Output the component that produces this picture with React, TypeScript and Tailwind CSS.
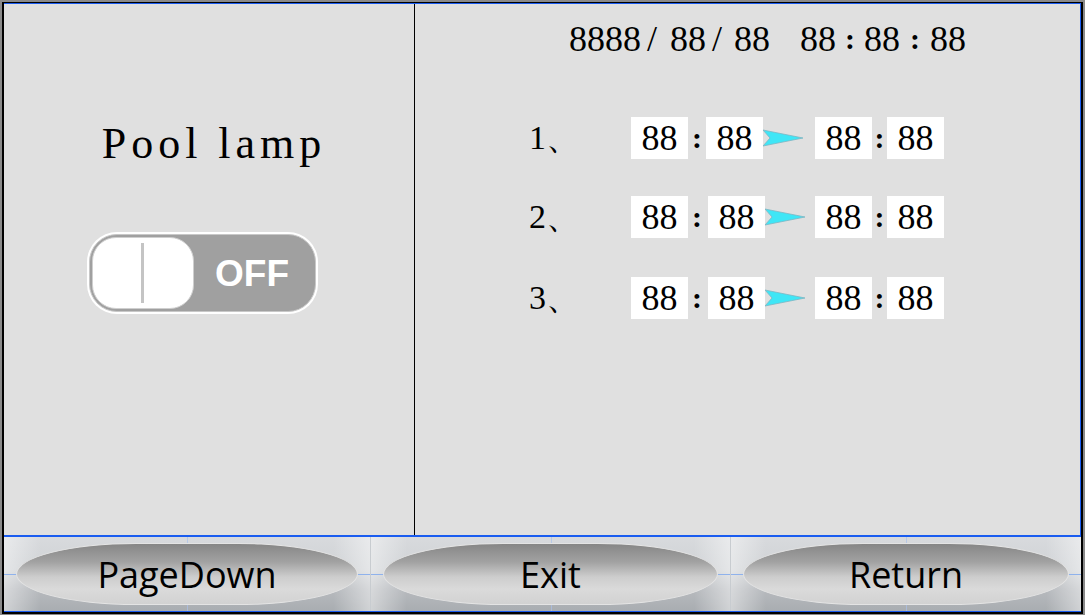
import React from "react";

const serif = "font-['Liberation_Serif','Times_New_Roman',serif]";

function Arrow() {
  return (
    <svg width="40" height="18" viewBox="0 0 40 18" className="shrink-0">
      <polygon points="0,1 40,9 0,17 7,9" fill="#3fe6f6" stroke="#7fb6c4" strokeWidth="0.8" />
    </svg>
  );
}

function Box({ children }: { children: React.ReactNode }) {
  return (
    <div className={`w-[57px] h-[42px] bg-white flex items-center justify-center text-[36px] leading-none text-black ${serif}`}>
      {children}
    </div>
  );
}

function Colon({ w }: { w: number }) {
  return (
    <div style={{ width: w }} className={`text-center text-[30px] font-bold leading-none text-black ${serif}`}>
      :
    </div>
  );
}

function TimeRow({ n, shift }: { n: number; shift: number }) {
  return (
    <div className="flex items-center">
      <div className={`w-[102px] text-[34px] leading-none text-black ${serif}`}>{n}、</div>
      <Box>88</Box>
      <Colon w={18} />
      <div style={{ marginLeft: shift }} className="flex items-center">
        <Box>88</Box>
        <Arrow />
      </div>
      <div style={{ marginLeft: 12 - shift }} className="flex items-center">
        <Box>88</Box>
        <Colon w={15} />
        <Box>88</Box>
      </div>
    </div>
  );
}

function Toggle() {
  return (
    <div className="w-[231px] h-[82px] rounded-[30px] bg-white p-[2px]">
      <div className="w-full h-full rounded-[28px] bg-[#a0a0a0] border border-[#c8c8c8] flex items-center p-[2px]">
        <div className="w-[102px] h-full rounded-[24px] bg-white border border-[#cfcfcf] flex items-center justify-center">
          <div className="w-[3px] h-[60px] bg-[#c4c4c4]" />
        </div>
        <div className="flex-1 text-center text-white text-[37px] font-bold font-['Liberation_Sans',Arial,sans-serif] leading-none pr-[2px]">
          OFF
        </div>
      </div>
    </div>
  );
}

function Btn({ label }: { label: string }) {
  return (
    <div className="relative flex-1 h-full px-[12px] py-[6px] bg-[linear-gradient(to_right,rgba(255,255,255,0.45)_0%,rgba(255,255,255,0)_10%,rgba(255,255,255,0)_90%,rgba(255,255,255,0.45)_100%),linear-gradient(to_bottom,#d8dadd_0%,#cfd2d5_45%,#b7babe_70%,#a9adb1_100%)]">
      <div className="absolute inset-x-0 top-1/2 h-px bg-[#8fb2ec]" />
      <div className="absolute inset-y-0 left-1/2 w-px bg-[#a9c0ea] opacity-70" />
      <div className="relative h-full rounded-[120px/31px] border border-[#e4e4e4] bg-[linear-gradient(to_bottom,#868686_0%,#a2a2a2_30%,#cdcdcd_55%,#dadada_75%,#d2d2d2_100%)] flex items-center justify-center">
        <span className="text-[36px] leading-none text-black font-['Open_Sans','Noto_Sans',sans-serif] pt-[2px]">{label}</span>
      </div>
    </div>
  );
}

export default function App() {
  return (
    <div className="w-[1085px] h-[615px] bg-[#8a8a8a] pt-[2px] px-[2px] pb-[1px]">
      <div className="w-full h-full flex flex-col border-black border-t border-x-2 border-b-2">
        <div className="flex-1 flex bg-[#e0e0e0] border-t border-r border-[#1a5cf0]">
          <div className="w-[411px] border-r border-black flex flex-col items-center">
            <div className={`mt-[118px] ml-[10px] text-[44px] leading-none tracking-[5px] text-black whitespace-pre ${serif}`}>
              Pool lamp
            </div>
            <div className="mt-[66px] -ml-[14px]">
              <Toggle />
            </div>
          </div>
          <div className="flex-1 flex flex-col">
            <div className={`mt-[17px] ml-[154px] flex items-center text-[36px] leading-none text-black ${serif}`}>
              <span>8888</span>
              <span className="ml-[6px]">/</span>
              <span className="ml-[13px]">88</span>
              <span className="ml-[6px]">/</span>
              <span className="ml-[12px]">88</span>
              <span className="ml-[30px]">88</span>
              <span className="ml-[9px] font-bold text-[30px]">:</span>
              <span className="ml-[9px]">88</span>
              <span className="ml-[10px] font-bold text-[30px]">:</span>
              <span className="ml-[10px]">88</span>
            </div>
            <div className="mt-[60px] ml-[114px] flex flex-col gap-[37px]">
              <TimeRow n={1} shift={0} />
              <TimeRow n={2} shift={2} />
              <div className="mt-[2px]">
                <TimeRow n={3} shift={2} />
              </div>
            </div>
          </div>
        </div>
        <div className="h-[77px] flex border-t-2 border-b border-[#1a5cf0]">
          <div className="w-[366px] flex h-full"><Btn label="PageDown" /></div>
          <div className="w-px bg-[#c8ccd0]" />
          <div className="w-[359px] flex h-full"><Btn label="Exit" /></div>
          <div className="w-px bg-[#c8ccd0]" />
          <div className="flex-1 flex h-full"><Btn label="Return" /></div>
        </div>
      </div>
    </div>
  );
}
